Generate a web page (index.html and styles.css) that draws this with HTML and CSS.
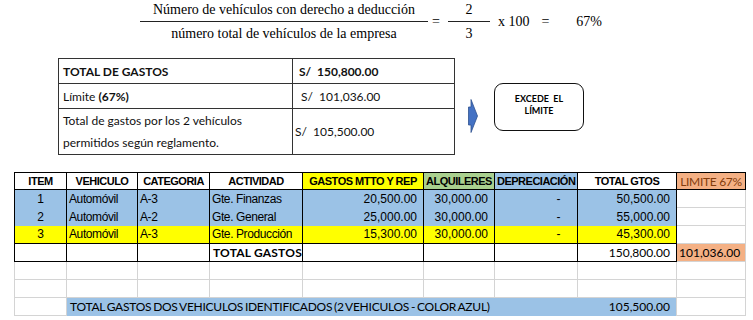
FILE: index.html
```html
<!DOCTYPE html>
<html>
<head>
<meta charset="utf-8">
<link rel="stylesheet" href="styles.css">
</head>
<body>
<div class="page">
  <div class="formula">
    <div class="frac big">
      <div class="num">Número de vehículos con derecho a deducción</div>
      <div class="den">número total de vehículos de la empresa</div>
    </div>
    <span class="eq eq1">=</span>
    <div class="frac small">
      <div class="num">2</div>
      <div class="den">3</div>
    </div>
    <span class="times">x 100</span>
    <span class="eq eq2">=</span>
    <span class="pct">67%</span>
  </div>

  <div class="summary-row">
    <table class="summary">
      <colgroup><col class="sc1"><col class="sc2"></colgroup>
      <tr class="r1"><td><b>TOTAL DE GASTOS</b></td><td class="v"><b>S/&nbsp; 150,800.00</b></td></tr>
      <tr class="r2"><td>Límite <b>(67%)</b></td><td class="v v2">S/&nbsp; 101,036.00</td></tr>
      <tr class="r3"><td class="two">Total de gastos por los 2 vehículos<br>permitidos según reglamento.</td><td class="v">S/&nbsp; 105,500.00</td></tr>
    </table>
    <svg class="arrow" width="10" height="34" viewBox="0 0 10 34">
      <polygon points="0.5,8 3,8 3,0.5 9.5,17 3,33.5 3,26 0.5,26" fill="#4472C4" stroke="#2F528F" stroke-width="0.8"/>
    </svg>
    <div class="exceed">EXCEDE&nbsp; EL<br>LÍMITE</div>
  </div>

  <table class="grid">
    <colgroup>
      <col class="c1"><col class="c2"><col class="c3"><col class="c4"><col class="c5"><col class="c6"><col class="c7"><col class="c8"><col class="c9">
    </colgroup>
    <tr class="head">
      <th>ITEM</th><th>VEHICULO</th><th>CATEGORIA</th><th>ACTIVIDAD</th>
      <th class="yel">GASTOS MTTO Y REP</th><th class="grn">ALQUILERES</th><th class="blu">DEPRECIACIÓN</th>
      <th>TOTAL GTOS</th><th class="org lim">LIMITE 67%</th>
    </tr>
    <tr class="data blue">
      <td class="ctr">1</td><td>Automóvil</td><td>A-3</td><td>Gte. Finanzas</td>
      <td class="num">20,500.00</td><td class="num">30,000.00</td><td class="dash">-</td><td class="num">50,500.00</td><td class="empty"></td>
    </tr>
    <tr class="data blue">
      <td class="ctr">2</td><td>Automóvil</td><td>A-2</td><td>Gte. General</td>
      <td class="num">25,000.00</td><td class="num">30,000.00</td><td class="dash">-</td><td class="num">55,000.00</td><td class="empty"></td>
    </tr>
    <tr class="data yellow">
      <td class="ctr">3</td><td>Automóvil</td><td>A-3</td><td>Gte. Producción</td>
      <td class="num">15,300.00</td><td class="num">30,000.00</td><td class="dash">-</td><td class="num">45,300.00</td><td class="empty"></td>
    </tr>
    <tr class="total">
      <td></td><td></td><td></td><td class="tlabel">TOTAL GASTOS</td><td></td><td></td><td></td>
      <td class="cnum">150,800.00</td><td class="cnum org lastcol">101,036.00</td>
    </tr>
    <tr class="blank"><td></td><td></td><td></td><td></td><td></td><td></td><td></td><td></td><td></td></tr>
    <tr class="blank"><td></td><td></td><td></td><td></td><td></td><td></td><td></td><td></td><td></td></tr>
    <tr class="final">
      <td class="g"></td>
      <td class="ftext" colspan="6">TOTAL GASTOS DOS VEHICULOS IDENTIFICADOS (2 VEHICULOS - COLOR AZUL)</td>
      <td class="fnum">105,500.00</td>
      <td class="g"></td>
    </tr>
  </table>
</div>
</body>
</html>
```

FILE: styles.css
```css
html, body {
  margin: 0;
  padding: 0;
  background: #ffffff;
  color: #000000;
}

.page {
  width: 753px;
  height: 320px;
  overflow: hidden;
  position: relative;
}

/* ---------- formula ---------- */
.formula {
  display: flex;
  align-items: center;
  margin-left: 140px;
  height: 44px;
  font-family: "Liberation Serif", "Times New Roman", serif;
  font-size: 14px;
  color: #000;
}

.frac {
  display: flex;
  flex-direction: column;
  align-items: stretch;
  text-align: center;
}

.frac .num {
  height: 21px;
  line-height: 18px;
  border-bottom: 1px solid #222;
  box-sizing: border-box;
  margin-bottom: 3px;
}

.frac .den {
  line-height: 18px;
  height: 20px;
}

.frac.big {
  width: 288px;
  margin-top: 2px;
}

.frac.small {
  width: 42px;
  margin-left: 8px;
  margin-top: 2px;
}

.eq1 { margin-left: 4px; }
.times { margin-left: 8px; }
.eq2 { margin-left: 12px; }
.pct { margin-left: 27px; }

/* ---------- summary ---------- */
.summary-row {
  display: flex;
  align-items: flex-start;
  margin-top: 14px;
  margin-left: 58px;
  height: 96px;
}

.summary {
  border-collapse: collapse;
  table-layout: fixed;
  width: 396px;
  font-family: Lato, "Open Sans", sans-serif;
  font-size: 12px;
  color: #111;
}

.summary .sc1 { width: 234px; }
.summary .sc2 { width: 162px; }

.summary td {
  border: 1px solid #333;
  padding: 0 0 0 4px;
  vertical-align: middle;
}

.summary .r1 td { height: 24px; }
.summary .r2 td { height: 24px; }
.summary .r3 td { height: 45px; }
.summary .v { padding-left: 6px; }
.summary .v2 { padding-left: 8px; }
.summary .r3 .v { padding-left: 2px; }
.summary .two { line-height: 22px; }

.arrow {
  margin-left: 13px;
  margin-top: 41px;
  display: block;
}

.exceed {
  margin-left: 16px;
  margin-top: 25px;
  width: 90px;
  height: 48px;
  box-sizing: border-box;
  border: 1px solid #111;
  border-radius: 9px;
  display: flex;
  align-items: center;
  justify-content: center;
  text-align: center;
  font-family: Lato, "Open Sans", sans-serif;
  font-weight: 700;
  font-size: 9px;
  line-height: 12px;
  padding-bottom: 4px;
}

/* ---------- main grid ---------- */
.grid {
  margin-top: 18px;
  margin-left: 14px;
  border-collapse: collapse;
  table-layout: fixed;
  width: 731px;
  font-family: "Liberation Sans", Arial, sans-serif;
  font-size: 12px;
}

.c1 { width: 52px; }
.c2 { width: 71px; }
.c3 { width: 72px; }
.c4 { width: 93px; }
.c5 { width: 121px; }
.c6 { width: 71px; }
.c7 { width: 83px; }
.c8 { width: 99px; }
.c9 { width: 69px; }

.grid th, .grid td {
  padding: 0 2px;
  white-space: nowrap;
  overflow: hidden;
}

.head th {
  height: 16px;
  border: 1px solid #000;
  font-weight: 700;
  font-size: 11px;
  letter-spacing: -0.5px;
  text-align: center;
  background: #fff;
}

.head th.yel { background: #FFFF00; }
.head th.grn { background: #A9D08E; }
.head th.blu { background: #9BC2E6; }
.head th.org { background: #F4B084; }
.head th.lim {
  font-family: Lato, "Open Sans", sans-serif;
  font-weight: 400;
  font-size: 12px;
  letter-spacing: -0.3px;
  color: #833C0C;
}

.data td {
  height: 17px;
  border-left: 1px solid #000;
  border-right: 1px solid #000;
  letter-spacing: -0.4px;
}

.data.blue td { background: #9BC2E6; }
.data.yellow td { background: #FFFF00; }

.data td.empty {
  background: #fff;
  border: 1px solid #D4D4D4;
  border-left: 1px solid #000;
}

.data .ctr { text-align: center; }
.data .num { text-align: right; padding-right: 6px; letter-spacing: 0; }
.data .dash { text-align: right; padding-right: 17px; }

.total td {
  height: 17px;
  border: 1px solid #000;
  font-family: Lato, "Open Sans", sans-serif;
}

.total .tlabel {
  font-weight: 700;
  font-size: 12px;
  letter-spacing: 0.2px;
  padding-left: 3px;
  padding-right: 0;
}

.total .cnum {
  text-align: right;
  padding-right: 6px;
  font-size: 12px;
}

.total .org {
  background: #F4B084;
  border-top-color: #D4D4D4;
  border-right-color: #D4D4D4;
  border-bottom-color: #D4D4D4;
}

.blank td {
  height: 17px;
  border: 1px solid #D4D4D4;
}

.final td {
  height: 17px;
  font-family: Lato, "Open Sans", sans-serif;
  font-size: 12px;
}

.final .g {
  border: 1px solid #D4D4D4;
}

.final .ftext {
  background: #9BC2E6;
  padding-left: 3px;
  letter-spacing: -0.25px;
  word-spacing: -1px;
}

.final .fnum {
  background: #9BC2E6;
  text-align: right;
  padding-right: 6px;
}
```
